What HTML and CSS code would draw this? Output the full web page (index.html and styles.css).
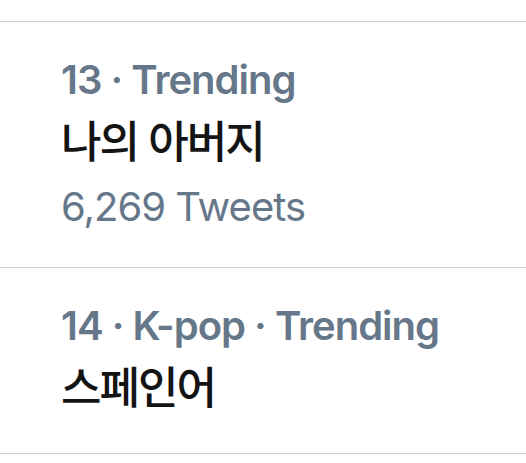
FILE: index.html
```html
<!DOCTYPE html>
<html lang="ko">
<head>
<meta charset="utf-8">
<link rel="stylesheet" href="styles.css">
</head>
<body>
<div class="list">
  <div class="trend">
    <div class="meta">13 · Trending</div>
    <div class="title">나의 아버지</div>
    <div class="count">6,269 Tweets</div>
  </div>
  <div class="trend">
    <div class="meta">14 · K-pop · Trending</div>
    <div class="title">스페인어</div>
  </div>
</div>
</body>
</html>
```

FILE: styles.css
```css
html, body {
  margin: 0;
  padding: 0;
  background: #ffffff;
}
body {
  font-family: Inter, "Noto Sans CJK KR", sans-serif;
  width: 526px;
  height: 463px;
  overflow: hidden;
}
.list {
  margin-top: 21px;
  border-top: 1px solid #cfcfd3;
}
.trend {
  padding: 34px 0 41px 61px;
  border-bottom: 1px solid #cfcfd3;
}
.meta {
  font-size: 40px;
  line-height: 48px;
  font-weight: 600;
  letter-spacing: -1px;
  color: #66778a;
}
.title {
  margin-top: 8px;
  font-family: "Noto Sans CJK KR", sans-serif;
  font-size: 44px;
  line-height: 54px;
  font-weight: 500;
  letter-spacing: -2px;
  color: #141414;
}
.count {
  margin-top: 22px;
  font-size: 40px;
  line-height: 38px;
  font-weight: 400;
  letter-spacing: -1px;
  color: #66778a;
}
```
